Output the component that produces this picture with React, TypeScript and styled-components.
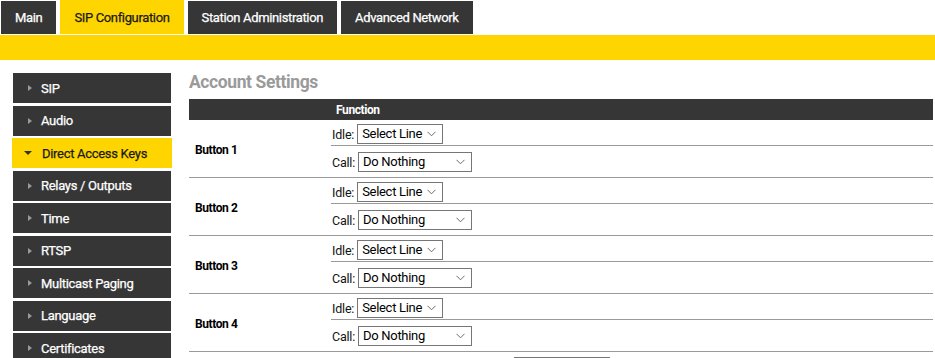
import React, { useState } from 'react';
import styled, { createGlobalStyle } from 'styled-components';

const GlobalStyle = createGlobalStyle`
  body {
    margin: 0;
    background: #ffffff;
    font-family: Roboto, "Liberation Sans", Arial, sans-serif;
  }
`;

const Page = styled.div`
  width: 935px;
  height: 358px;
  overflow: hidden;
`;

const TabBar = styled.div`
  display: flex;
  gap: 4px;
  padding: 1px 0 0 1px;
`;

const Tab = styled.div<{ $active?: boolean }>`
  display: flex;
  align-items: center;
  padding: 0 14px;
  background: ${(p) => (p.$active ? '#ffd500' : '#363636')};
  color: ${(p) => (p.$active ? '#1a1a1a' : '#ffffff')};
  font-size: 13px;
  font-weight: 400;
  letter-spacing: -0.35px;
  cursor: pointer;
  margin-top: ${(p) => (p.$active ? '-1px' : '0')};
  height: ${(p) => (p.$active ? '34px' : '33px')};
  -webkit-text-stroke: 0.25px currentColor;
`;

const YellowBar = styled.div`
  height: 25px;
  margin-top: 1px;
  background: #ffd500;
`;

const Body = styled.div`
  display: flex;
  gap: 17px;
  padding: 13px 2px 0 12px;
`;

const Sidebar = styled.nav`
  width: 160px;
  flex-shrink: 0;
  display: flex;
  flex-direction: column;
  gap: 2.5px;
`;

const NavItem = styled.div<{ $active?: boolean }>`
  height: 30px;
  display: flex;
  align-items: center;
  gap: 9px;
  margin: 0 ${(p) => (p.$active ? '0' : '1px')};
  padding-left: ${(p) => (p.$active ? '12px' : '14px')};
  background: ${(p) => (p.$active ? '#ffd500' : '#363636')};
  color: ${(p) => (p.$active ? '#1a1a1a' : '#ffffff')};
  font-size: 13px;
  font-weight: 400;
  letter-spacing: -0.3px;
  -webkit-text-stroke: 0.25px currentColor;
  cursor: pointer;
`;

const Arrow = styled.span<{ $open?: boolean }>`
  width: 0;
  height: 0;
  flex-shrink: 0;
  ${(p) =>
    p.$open
      ? `border-left: 4px solid transparent;
         border-right: 4px solid transparent;
         border-top: 4px solid #333;
         margin-right: 1px;`
      : `border-top: 3.5px solid transparent;
         border-bottom: 3.5px solid transparent;
         border-left: 4px solid #9a9a9a;
         margin-left: 1px;
         margin-right: 0;`}
`;

const Content = styled.section`
  flex: 1;
`;

const Heading = styled.h2`
  margin: 0;
  height: 26px;
  font-size: 17.5px;
  font-weight: 700;
  letter-spacing: -0.4px;
  color: #9a9a9a;
  line-height: 18px;
`;

const HeaderRow = styled.div`
  display: grid;
  grid-template-columns: 142px 1fr;
  height: 21px;
  align-items: center;
  background: #363636;
  color: #ffffff;
  font-size: 12px;
  font-weight: 700;
  letter-spacing: -0.4px;
`;

const HeaderCell = styled.div`
  padding-left: 5px;
`;

const KeyRow = styled.div`
  display: grid;
  grid-template-columns: 142px 1fr;
  border-bottom: 1px solid #9a9a9a;
`;

const KeyName = styled.div`
  display: flex;
  align-items: center;
  padding: 2px 0 0 6px;
  font-size: 12px;
  font-weight: 700;
  letter-spacing: -0.4px;
  color: #000;
`;

const FuncCell = styled.div`
  display: flex;
  flex-direction: column;
`;

const FuncLine = styled.div<{ $first?: boolean }>`
  display: flex;
  align-items: center;
  gap: 3px;
  height: ${(p) => (p.$first ? '26px' : '31px')};
  padding-top: ${(p) => (p.$first ? '3px' : '1px')};
  box-sizing: border-box;
  border-bottom: ${(p) => (p.$first ? '1px solid #9a9a9a' : 'none')};
  font-size: 12.5px;
  letter-spacing: -0.2px;
  color: #111;
  padding-left: 1px;
`;

const SelectBox = styled.div<{ $w: number }>`
  position: relative;
  width: ${(p) => p.$w}px;
  height: 20px;
`;

const Select = styled.select`
  appearance: none;
  -webkit-appearance: none;
  box-sizing: border-box;
  width: 100%;
  height: 20px;
  margin: 0;
  font-family: Roboto, "Liberation Sans", Arial, sans-serif;
  font-size: 13px;
  color: #000;
  background: #fff;
  border: 1px solid #767676;
  border-radius: 0;
  padding: 0 0 0 4px;
  letter-spacing: -0.3px;
  line-height: 18px;
  outline: none;
`;

const Chevron = styled.svg`
  position: absolute;
  right: 7px;
  top: 7px;
  width: 9px;
  height: 6px;
  pointer-events: none;
`;

const Footer = styled.div`
  display: flex;
  justify-content: center;
  padding-top: 5px;
  padding-left: 2px;
`;

const SaveButton = styled.button`
  width: 96px;
  height: 26px;
  border: 1px solid #767676;
  background: #efefef;
`;

const tabs = ['Main', 'SIP Configuration', 'Station Administration', 'Advanced Network'];
const navItems = [
  'SIP',
  'Audio',
  'Direct Access Keys',
  'Relays / Outputs',
  'Time',
  'RTSP',
  'Multicast Paging',
  'Language',
  'Certificates',
];
const keys = ['Button 1', 'Button 2', 'Button 3', 'Button 4'];

function Dropdown({ width, children, value }: { width: number; children: React.ReactNode; value: string }) {
  return (
    <SelectBox $w={width}>
      <Select defaultValue={value}>{children}</Select>
      <Chevron viewBox="0 0 9 6">
        <path d="M0.5 0.8 L4.5 4.8 L8.5 0.8" fill="none" stroke="#6b6b6b" strokeWidth="1" />
      </Chevron>
    </SelectBox>
  );
}

export default function App() {
  const [activeTab, setActiveTab] = useState('SIP Configuration');
  const [activeNav, setActiveNav] = useState('Direct Access Keys');

  return (
    <Page>
      <GlobalStyle />
      <TabBar>
        {tabs.map((t) => (
          <Tab key={t} $active={t === activeTab} onClick={() => setActiveTab(t)}>
            {t}
          </Tab>
        ))}
      </TabBar>
      <YellowBar />
      <Body>
        <Sidebar>
          {navItems.map((n) => (
            <NavItem key={n} $active={n === activeNav} onClick={() => setActiveNav(n)}>
              <Arrow $open={n === activeNav} />
              {n}
            </NavItem>
          ))}
        </Sidebar>
        <Content>
          <Heading>Account Settings</Heading>
          <HeaderRow>
            <div />
            <HeaderCell>Function</HeaderCell>
          </HeaderRow>
          {keys.map((k) => (
            <KeyRow key={k}>
              <KeyName>{k}</KeyName>
              <FuncCell>
                <FuncLine $first>
                  Idle:
                  <Dropdown width={86} value="line">
                    <option value="line">Select Line</option>
                    <option value="1">Line 1</option>
                    <option value="2">Line 2</option>
                  </Dropdown>
                </FuncLine>
                <FuncLine>
                  Call:
                  <Dropdown width={114} value="none">
                    <option value="none">Do Nothing</option>
                    <option value="hang">Hang Up</option>
                  </Dropdown>
                </FuncLine>
              </FuncCell>
            </KeyRow>
          ))}
          <Footer>
            <SaveButton aria-label="Save" />
          </Footer>
        </Content>
      </Body>
    </Page>
  );
}
